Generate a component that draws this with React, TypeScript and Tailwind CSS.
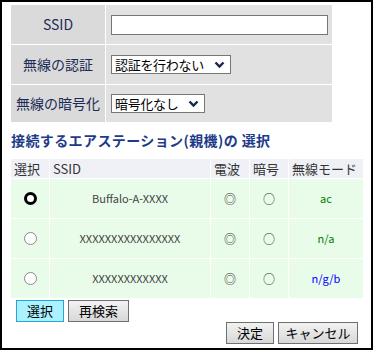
import React from "react";

const F = { fontFamily: '"Noto Sans CJK JP", "Noto Sans", sans-serif' };

function Chevron() {
  return (
    <svg width="11" height="8" viewBox="0 0 11 8" className="shrink-0">
      <path d="M1.5 1.5 L5.5 5.5 L9.5 1.5" fill="none" stroke="#1a2550" strokeWidth="2.4" />
    </svg>
  );
}

function Select({ text, w }: { text: string; w: string }) {
  return (
    <div className={`${w} h-[19px] bg-white border border-[#767676] flex items-center justify-between pl-[3px] pr-[5px] text-[13px] leading-none text-black`}>
      <span className="tracking-[-0.3px]">{text}</span>
      <Chevron />
    </div>
  );
}

function Radio({ on }: { on?: boolean }) {
  return on ? (
    <div className="w-[13px] h-[13px] rounded-full border-[3.5px] border-black bg-white" />
  ) : (
    <div className="w-[13px] h-[13px] rounded-full border border-[#8a8a8a] bg-white" />
  );
}

const rows = [
  { ssid: "Buffalo-A-XXXX", mode: "ac", color: "text-[#008000]", on: true },
  { ssid: "XXXXXXXXXXXXXXXX", mode: "n/a", color: "text-[#008000]" },
  { ssid: "XXXXXXXXXXXX", mode: "n/g/b", color: "text-[#0000ff]" },
];

export default function App() {
  return (
    <div style={F} className="w-[373px] h-[350px] border-2 border-black bg-white box-border">
      <div className="pl-[9px] pt-[3px]">
        <div className="grid grid-cols-[94px_226px] gap-px w-[321px]">
          <div className="h-[39px] bg-[#dadada] flex items-center justify-center text-[14px] text-[#1b2a55]">SSID</div>
          <div className="h-[39px] bg-[#e1e1e1] flex items-center pl-[5px]">
            <div className="w-[217px] h-[20px] bg-white border border-[#767676]" />
          </div>
          <div className="h-[39px] bg-[#dadada] flex items-center justify-center text-[14px] text-[#1b2a55]">無線の認証</div>
          <div className="h-[39px] bg-[#e1e1e1] flex items-center pl-[5px]">
            <Select text="認証を行わない" w="w-[120px]" />
          </div>
          <div className="h-[37px] bg-[#dadada] flex items-center justify-center text-[14px] text-[#1b2a55]">無線の暗号化</div>
          <div className="h-[37px] bg-[#e1e1e1] flex items-center pl-[5px]">
            <Select text="暗号化なし" w="w-[94px]" />
          </div>
        </div>

        <div className="mt-[8px] h-[20px] flex items-center text-[14px] font-bold text-[#1d3b8a] tracking-[0.4px]">
          接続するエアステーション(親機)の 選択
        </div>

        <div className="mt-[9px] grid grid-cols-[38px_160px_38px_38px_74px] gap-px w-[352px]">
          {["選択", "SSID", "電波", "暗号", "無線モード"].map((h) => (
            <div key={h} className="h-[19px] bg-[#f0f1f7] flex items-center pl-[3px] text-[13px] text-[#333] leading-none">
              {h}
            </div>
          ))}
          {rows.map((r, i) => (
            <React.Fragment key={i}>
              <div className="h-[39px] bg-[#e9fbe9] flex items-center justify-center"><Radio on={r.on} /></div>
              <div className="h-[39px] bg-[#e9fbe9] flex items-center justify-center text-[11px] text-[#444]">{r.ssid}</div>
              <div className="h-[39px] bg-[#e9fbe9] flex items-center justify-center text-[12px] text-[#333]">◎</div>
              <div className="h-[39px] bg-[#e9fbe9] flex items-center justify-center text-[12px] text-[#333]">○</div>
              <div className={`h-[39px] bg-[#e9fbe9] flex items-center justify-center text-[11px] ${r.color}`}>{r.mode}</div>
            </React.Fragment>
          ))}
        </div>

        <div className="mt-[2px] ml-[5px] flex gap-[4px]">
          <div className="w-[48px] h-[22px] bg-[#aaf2ff] border border-[#2aa3dc] flex items-center justify-center text-[13px] text-black">選択</div>
          <div className="w-[61px] h-[22px] bg-gradient-to-b from-[#f2f2f2] to-[#d8d8d8] border border-[#707070] flex items-center justify-center text-[13px] text-black">再検索</div>
        </div>

        <div className="mt-[0px] mr-[13px] flex justify-end gap-[4px]">
          <div className="w-[48px] h-[22px] bg-gradient-to-b from-[#f2f2f2] to-[#d8d8d8] border border-[#707070] flex items-center justify-center text-[13px] text-black">決定</div>
          <div className="w-[80px] h-[22px] bg-gradient-to-b from-[#f2f2f2] to-[#d8d8d8] border border-[#707070] flex items-center justify-center text-[13px] text-black">キャンセル</div>
        </div>
      </div>
    </div>
  );
}
